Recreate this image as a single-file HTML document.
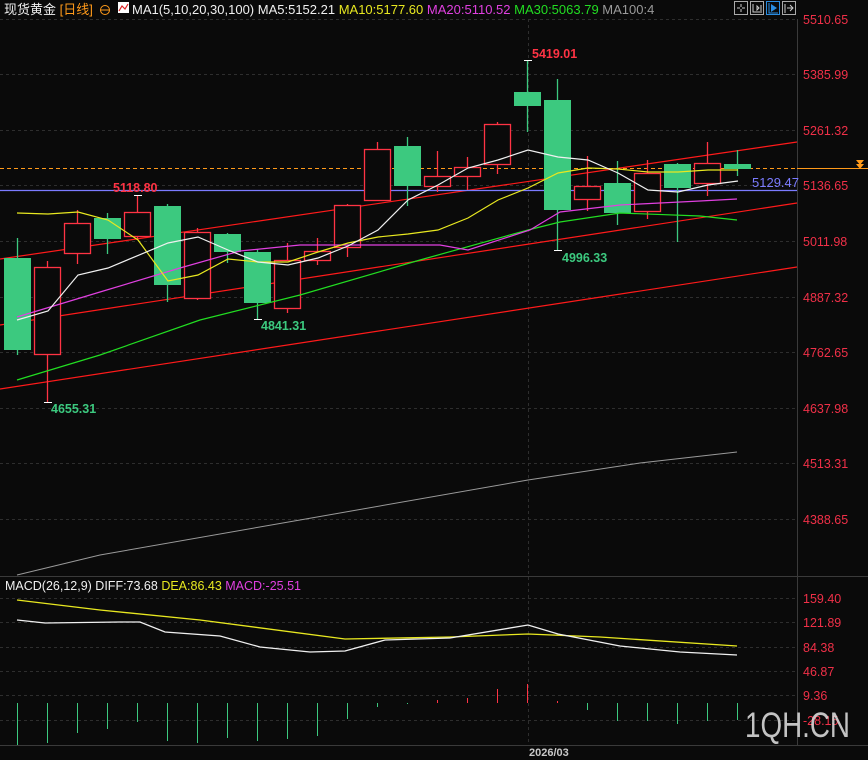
<!DOCTYPE html>
<html><head><meta charset="utf-8"><style>
html,body{margin:0;padding:0;background:#0a0a0a;width:868px;height:760px;overflow:hidden}
svg{display:block}
text{font-family:"Liberation Sans","Noto Sans CJK SC",sans-serif}
</style></head><body>
<svg width="868" height="760" viewBox="0 0 868 760" xmlns="http://www.w3.org/2000/svg">
<rect width="868" height="760" fill="#0a0a0a"/>
<g stroke="#2e2e2e" stroke-dasharray="3,3" stroke-width="1">
<line x1="0" y1="19.5" x2="797" y2="19.5"/><line x1="0" y1="74.5" x2="797" y2="74.5"/><line x1="0" y1="130.5" x2="797" y2="130.5"/><line x1="0" y1="185.5" x2="797" y2="185.5"/><line x1="0" y1="241.5" x2="797" y2="241.5"/><line x1="0" y1="297.5" x2="797" y2="297.5"/><line x1="0" y1="352.5" x2="797" y2="352.5"/><line x1="0" y1="408.5" x2="797" y2="408.5"/><line x1="0" y1="463.5" x2="797" y2="463.5"/><line x1="0" y1="519.5" x2="797" y2="519.5"/>
<line x1="0" y1="598.5" x2="797" y2="598.5"/><line x1="0" y1="622.5" x2="797" y2="622.5"/><line x1="0" y1="647.5" x2="797" y2="647.5"/><line x1="0" y1="671.5" x2="797" y2="671.5"/><line x1="0" y1="695.5" x2="797" y2="695.5"/><line x1="0" y1="720.5" x2="797" y2="720.5"/>
<line x1="528.5" y1="19" x2="528.5" y2="745"/>
</g>
<g stroke="#3a3a3a"><line x1="0" y1="576.5" x2="868" y2="576.5"/><line x1="0" y1="745.5" x2="868" y2="745.5"/><line x1="797.5" y1="19" x2="797.5" y2="745"/></g>
<polyline fill="none" stroke="#9a9a9a" points="17,575 100,555 300,520 528,480 640,463 737,452"/>
<g stroke="#ff1a1a" stroke-width="1.2"><line x1="0" y1="259" x2="797" y2="142"/><line x1="0" y1="325" x2="797" y2="203"/><line x1="0" y1="389" x2="797" y2="267"/></g>
<line x1="0" y1="190.5" x2="797" y2="190.5" stroke="#7b7bff" stroke-width="1.3"/>
<line x1="0" y1="168.5" x2="797" y2="168.5" stroke="#ff9a1a" stroke-dasharray="4,3"/>
<line x1="797" y1="168.5" x2="868" y2="168.5" stroke="#ff9a1a"/>
<g stroke-width="1.3">
<line x1="17.5" y1="238" x2="17.5" y2="355" stroke="#3cc97f"/><rect x="4" y="258" width="27" height="92" fill="#3cc97f"/>
<line x1="47.5" y1="261" x2="47.5" y2="402" stroke="#ff3344"/><rect x="34.5" y="267.5" width="26" height="87" fill="#0a0a0a" stroke="#ff3344"/>
<line x1="77.5" y1="210" x2="77.5" y2="264" stroke="#ff3344"/><rect x="64.5" y="223.5" width="26" height="30" fill="#0a0a0a" stroke="#ff3344"/>
<line x1="107.5" y1="213" x2="107.5" y2="254" stroke="#3cc97f"/><rect x="94" y="218" width="27" height="21" fill="#3cc97f"/>
<line x1="137.5" y1="195" x2="137.5" y2="239" stroke="#ff3344"/><rect x="124.5" y="212.5" width="26" height="24" fill="#0a0a0a" stroke="#ff3344"/>
<line x1="167.5" y1="204" x2="167.5" y2="302" stroke="#3cc97f"/><rect x="154" y="206" width="27" height="79" fill="#3cc97f"/>
<line x1="197.5" y1="228" x2="197.5" y2="300" stroke="#ff3344"/><rect x="184.5" y="232.5" width="26" height="66" fill="#0a0a0a" stroke="#ff3344"/>
<line x1="227.5" y1="233" x2="227.5" y2="263" stroke="#3cc97f"/><rect x="214" y="234" width="27" height="18" fill="#3cc97f"/>
<line x1="257.5" y1="249" x2="257.5" y2="319" stroke="#3cc97f"/><rect x="244" y="252" width="27" height="51" fill="#3cc97f"/>
<line x1="287.5" y1="243" x2="287.5" y2="313" stroke="#ff3344"/><rect x="274.5" y="260.5" width="26" height="48" fill="#0a0a0a" stroke="#ff3344"/>
<line x1="317.5" y1="238" x2="317.5" y2="265" stroke="#ff3344"/><rect x="304.5" y="251.5" width="26" height="9" fill="#0a0a0a" stroke="#ff3344"/>
<line x1="347.5" y1="204" x2="347.5" y2="257" stroke="#ff3344"/><rect x="334.5" y="205.5" width="26" height="42" fill="#0a0a0a" stroke="#ff3344"/>
<line x1="377.5" y1="142" x2="377.5" y2="200" stroke="#ff3344"/><rect x="364.5" y="149.5" width="26" height="51" fill="#0a0a0a" stroke="#ff3344"/>
<line x1="407.5" y1="137" x2="407.5" y2="206" stroke="#3cc97f"/><rect x="394" y="146" width="27" height="40" fill="#3cc97f"/>
<line x1="437.5" y1="151" x2="437.5" y2="192" stroke="#ff3344"/><rect x="424.5" y="176.5" width="26" height="10" fill="#0a0a0a" stroke="#ff3344"/>
<line x1="467.5" y1="157" x2="467.5" y2="190" stroke="#ff3344"/><rect x="454.5" y="167.5" width="26" height="9" fill="#0a0a0a" stroke="#ff3344"/>
<line x1="497.5" y1="122" x2="497.5" y2="174" stroke="#ff3344"/><rect x="484.5" y="124.5" width="26" height="40" fill="#0a0a0a" stroke="#ff3344"/>
<line x1="527.5" y1="60" x2="527.5" y2="132" stroke="#3cc97f"/><rect x="514" y="92" width="27" height="14" fill="#3cc97f"/>
<line x1="557.5" y1="79" x2="557.5" y2="250" stroke="#3cc97f"/><rect x="544" y="100" width="27" height="110" fill="#3cc97f"/>
<line x1="587.5" y1="156" x2="587.5" y2="211" stroke="#ff3344"/><rect x="574.5" y="186.5" width="26" height="13" fill="#0a0a0a" stroke="#ff3344"/>
<line x1="617.5" y1="161" x2="617.5" y2="225" stroke="#3cc97f"/><rect x="604" y="183" width="27" height="30" fill="#3cc97f"/>
<line x1="647.5" y1="160" x2="647.5" y2="219" stroke="#ff3344"/><rect x="634.5" y="173.5" width="26" height="38" fill="#0a0a0a" stroke="#ff3344"/>
<line x1="677.5" y1="163" x2="677.5" y2="242" stroke="#3cc97f"/><rect x="664" y="164" width="27" height="24" fill="#3cc97f"/>
<line x1="707.5" y1="142" x2="707.5" y2="196" stroke="#ff3344"/><rect x="694.5" y="163.5" width="26" height="20" fill="#0a0a0a" stroke="#ff3344"/>
<line x1="737.5" y1="150" x2="737.5" y2="176" stroke="#3cc97f"/><rect x="724" y="164" width="27" height="5" fill="#3cc97f"/>
</g>
<polyline fill="none" stroke="#22dd22" stroke-width="1.2" points="17,380 100,355 200,320 300,295 420,260 528,230 560,222 620,213 700,216 737,220"/>
<polyline fill="none" stroke="#e040e0" stroke-width="1.2" points="17,317 100,292 180,268 240,251 300,245 440,245 468,250 530,230 560,212 620,205 700,201 737,199"/>
<polyline fill="none" stroke="#e8e820" stroke-width="1.2" points="17,213 48,214 78,212 108,220 138,240 168,281 198,275 228,259 258,262 288,262 318,252 348,243 378,237 408,234 438,230 468,218 498,200 528,188 558,173 588,168 618,169 648,172 678,172 708,170 738,170"/>
<polyline fill="none" stroke="#f0f0f0" stroke-width="1.2" points="17,320 48,311 78,275 108,268 168,243 198,237 228,250 258,262 288,265 318,258 348,246 378,230 408,200 438,185 468,168 498,160 528,150 558,157 588,160 618,173 648,190 678,192 708,185 738,181"/>
<g stroke="#fff"><line x1="44" y1="402.5" x2="52" y2="402.5"/><line x1="254" y1="319.5" x2="262" y2="319.5"/><line x1="524" y1="60.5" x2="532" y2="60.5"/><line x1="554" y1="250.5" x2="562" y2="250.5"/><line x1="134" y1="195.5" x2="142" y2="195.5"/></g>
<g font-size="12.5" font-weight="bold">
<text x="51" y="413" fill="#3cc97f">4655.31</text>
<text x="261" y="330" fill="#3cc97f">4841.31</text>
<text x="562" y="262" fill="#3cc97f">4996.33</text>
<text x="532" y="58" fill="#ff3344">5419.01</text>
<text x="113" y="192" fill="#ff3344">5118.80</text>
</g>
<text x="752" y="187" fill="#7b7bff" font-size="13">5129.47</text>
<polygon points="856,160 864,160 860,165" fill="#ff9a1a"/><polygon points="856,164 864,164 860,169" fill="#ff9a1a"/>
<g fill="#f03048" font-size="12.5">
<text x="803" y="24">5510.65</text><text x="803" y="79">5385.99</text><text x="803" y="135">5261.32</text><text x="803" y="190">5136.65</text><text x="803" y="246">5011.98</text><text x="803" y="302">4887.32</text><text x="803" y="357">4762.65</text><text x="803" y="413">4637.98</text><text x="803" y="468">4513.31</text><text x="803" y="524">4388.65</text>
<text x="803" y="603">159.40</text><text x="803" y="627">121.89</text><text x="803" y="652">84.38</text><text x="803" y="676">46.87</text><text x="803" y="700">9.36</text><text x="803" y="725">-28.15</text>
</g>
<polyline fill="none" stroke="#e8e820" stroke-width="1.3" points="17,600 100,610 200,620 345,639 450,637 528,634 600,637 737,646"/>
<polyline fill="none" stroke="#f0f0f0" stroke-width="1.3" points="17,620 45,623 120,622 140,622 165,632 220,636 260,647 310,652 345,651 385,640 450,638 528,625 558,634 620,646 680,652 737,655"/>
<g stroke="#3cc97f">
<line x1="17.5" y1="703" x2="17.5" y2="745"/><line x1="47.5" y1="703" x2="47.5" y2="743"/><line x1="77.5" y1="703" x2="77.5" y2="733"/><line x1="107.5" y1="703" x2="107.5" y2="729"/><line x1="137.5" y1="703" x2="137.5" y2="722"/><line x1="167.5" y1="703" x2="167.5" y2="741"/><line x1="197.5" y1="703" x2="197.5" y2="743"/><line x1="227.5" y1="703" x2="227.5" y2="738"/><line x1="257.5" y1="703" x2="257.5" y2="741"/><line x1="287.5" y1="703" x2="287.5" y2="739"/><line x1="317.5" y1="703" x2="317.5" y2="736"/><line x1="347.5" y1="703" x2="347.5" y2="719"/><line x1="377.5" y1="703" x2="377.5" y2="707"/><line x1="407.5" y1="703" x2="407.5" y2="704"/>
<line x1="587.5" y1="703" x2="587.5" y2="710"/><line x1="617.5" y1="703" x2="617.5" y2="721"/><line x1="647.5" y1="703" x2="647.5" y2="721"/><line x1="677.5" y1="703" x2="677.5" y2="724"/><line x1="707.5" y1="703" x2="707.5" y2="721"/><line x1="737.5" y1="703" x2="737.5" y2="720"/>
</g>
<g stroke="#ff3344"><line x1="437.5" y1="700" x2="437.5" y2="703"/><line x1="467.5" y1="698" x2="467.5" y2="703"/><line x1="497.5" y1="689" x2="497.5" y2="703"/><line x1="527.5" y1="684" x2="527.5" y2="703"/><line x1="557.5" y1="701" x2="557.5" y2="703"/></g>
<text x="5" y="590" font-size="12.5"><tspan fill="#f0f0f0">MACD(26,12,9) DIFF:73.68 </tspan><tspan fill="#e8e820">DEA:86.43 </tspan><tspan fill="#e040e0">MACD:-25.51</tspan></text>
<text x="529" y="756" fill="#c8c8c8" font-size="11" font-weight="bold">2026/03</text>
<text x="745" y="737" fill="#d8d8d8" font-size="35" textLength="105" lengthAdjust="spacingAndGlyphs" opacity="0.9">1QH.CN</text>
<text x="4" y="14" font-size="13"><tspan fill="#f0f0f0">现货黄金 </tspan><tspan fill="#ff9a1a">[日线]</tspan></text>
<circle cx="105" cy="10" r="4.5" fill="none" stroke="#ff9a1a"/><line x1="100" y1="10" x2="110" y2="10" stroke="#ff9a1a"/>
<rect x="118" y="2" width="11" height="11" fill="#fff"/><polyline points="119,11 122,6 125,9 128,4" fill="none" stroke="#d22" stroke-width="1.2"/>
<text x="132" y="14" font-size="13"><tspan fill="#f0f0f0">MA1(5,10,20,30,100) MA5:5152.21 </tspan><tspan fill="#e8e820">MA10:5177.60 </tspan><tspan fill="#e040e0">MA20:5110.52 </tspan><tspan fill="#22dd22">MA30:5063.79 </tspan><tspan fill="#9a9a9a">MA100:4</tspan></text>
<g fill="none" stroke-width="1">
<rect x="734.5" y="1.5" width="13" height="13" stroke="#aaa"/><path d="M741 4v3M741 9v3M737 8h3M742 8h3" stroke="#ccc"/>
<rect x="750.5" y="1.5" width="13" height="13" stroke="#aaa"/><path d="M753 4v8h9M761 5v6M759 8l-2-2v4z" stroke="#ccc"/>
<rect x="766.5" y="1.5" width="13" height="13" stroke="#2a8ce0"/><path d="M769 3v10h9" stroke="#2a8ce0"/><path d="M771 4l6 4-6 4z" fill="#2a8ce0" stroke="none"/>
<rect x="782.5" y="1.5" width="13" height="13" stroke="#aaa"/><path d="M785 4v9M787 8h6M790 5l3 3-3 3" stroke="#ccc"/>
</g>
</svg>
</body></html>
